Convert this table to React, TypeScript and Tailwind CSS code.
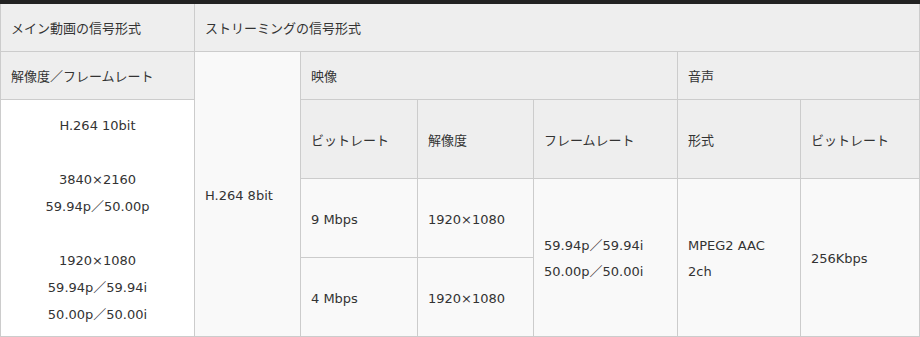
import React from "react";

const font = { fontFamily: '"DejaVu Sans", "Noto Sans CJK JP", sans-serif' };

export default function App() {
  const th = "bg-[#eeeeee] flex items-center px-[10px] pt-[3px]";
  const td = "bg-[#f9f9f9] flex items-center px-[10px] pt-[3px]";
  return (
    <div className="w-[920px] h-[337px] bg-white text-[13px] text-[#333]" style={font}>
      <div className="h-[4px] bg-[#222]" />
      <div className="grid grid-cols-[193px_105px_116px_115px_143px_122px_118px] grid-rows-[47px_47px_78px_78px_78px] gap-px bg-[#cccccc] border-x border-b border-[#cccccc]">
        <div className={`${th} col-start-1 row-start-1`}>メイン動画の信号形式</div>
        <div className={`${th} col-start-2 col-span-6 row-start-1`}>ストリーミングの信号形式</div>

        <div className={`${th} col-start-1 row-start-2`}>解像度／フレームレート</div>
        <div className={`${td} col-start-2 row-start-2 row-span-4`}>H.264 8bit</div>
        <div className={`${th} col-start-3 col-span-3 row-start-2`}>映像</div>
        <div className={`${th} col-start-6 col-span-2 row-start-2`}>音声</div>

        <div className="bg-white col-start-1 row-start-3 row-span-3 flex flex-col items-center justify-center text-center leading-[27px] pt-[4px]">
          <span>H.264 10bit</span>
          <span>&nbsp;</span>
          <span>3840×2160</span>
          <span>59.94p／50.00p</span>
          <span>&nbsp;</span>
          <span>1920×1080</span>
          <span>59.94p／59.94i</span>
          <span>50.00p／50.00i</span>
        </div>
        <div className={`${th} col-start-3 row-start-3`}>ビットレート</div>
        <div className={`${th} col-start-4 row-start-3`}>解像度</div>
        <div className={`${th} col-start-5 row-start-3`}>フレームレート</div>
        <div className={`${th} col-start-6 row-start-3`}>形式</div>
        <div className={`${th} col-start-7 row-start-3`}>ビットレート</div>

        <div className={`${td} col-start-3 row-start-4`}>9 Mbps</div>
        <div className={`${td} col-start-4 row-start-4`}>1920×1080</div>
        <div className={`${td} col-start-5 row-start-4 row-span-2 leading-[26px]`}>
          <div>
            59.94p／59.94i
            <br />
            50.00p／50.00i
          </div>
        </div>
        <div className={`${td} col-start-6 row-start-4 row-span-2 leading-[26px]`}>
          <div>
            MPEG2 AAC
            <br />
            2ch
          </div>
        </div>
        <div className={`${td} col-start-7 row-start-4 row-span-2`}>256Kbps</div>

        <div className={`${td} col-start-3 row-start-5`}>4 Mbps</div>
        <div className={`${td} col-start-4 row-start-5`}>1920×1080</div>
      </div>
    </div>
  );
}
